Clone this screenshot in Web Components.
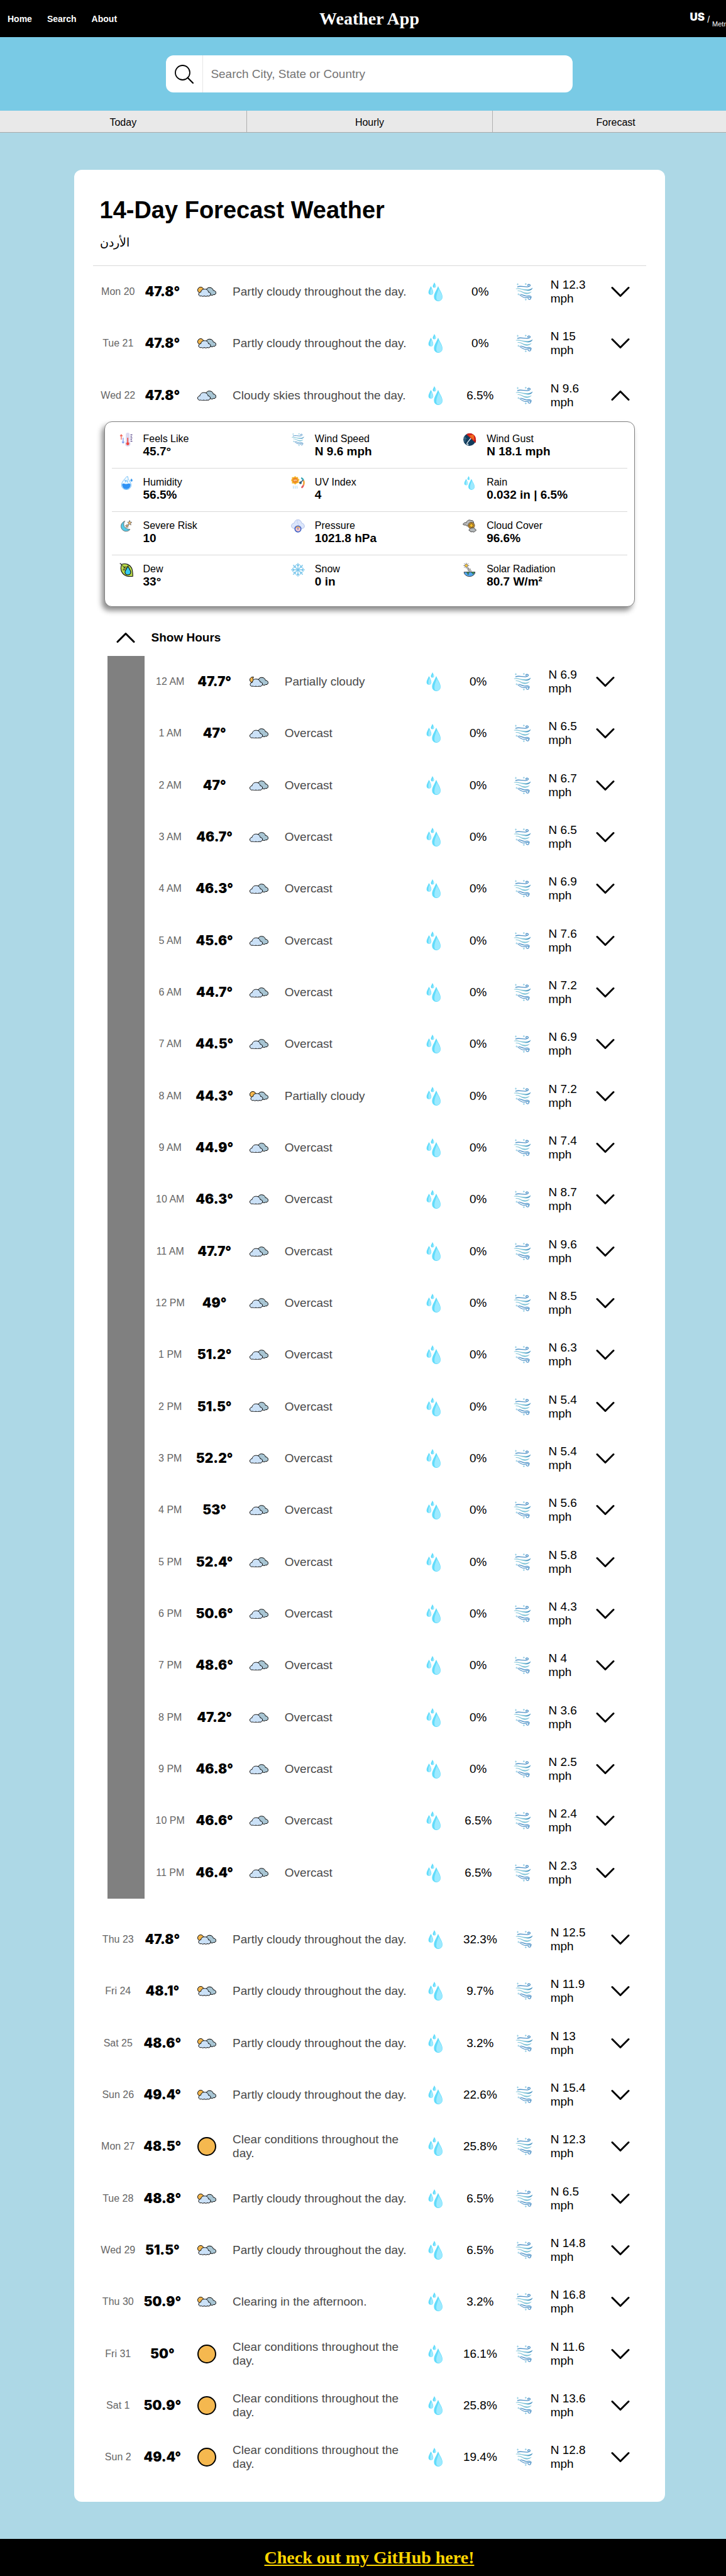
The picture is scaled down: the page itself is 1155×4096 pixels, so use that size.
<!DOCTYPE html>
<html lang="en">
<head>
<meta charset="utf-8">
<title>Weather App</title>
<style>
  html { overflow-x: hidden; }
  body { margin: 0; background: #add8e6; color: #000; font-family: "Liberation Sans", Arial, sans-serif; font-size: 19px; }
</style>
</head>
<body>
<weather-page></weather-page>

<script>
const ICONS = {
  chevron: `<svg viewBox="0 0 30 18"><path d="M2 2.5 15 15.5 28 2.5" fill="none" stroke="#000" stroke-width="3" stroke-linecap="round" stroke-linejoin="round"/></svg>`,
  search: `<svg viewBox="0 0 30 30"><circle cx="12.5" cy="12.5" r="11.5" fill="none" stroke="#000" stroke-width="1.8"/><path d="M20.5 20.5 29 29" stroke="#000" stroke-width="2.2" stroke-linecap="round"/></svg>`,
  overcast: `<svg viewBox="0 0 60 32"><g stroke="#000" stroke-width="2" stroke-linejoin="round"><path fill="#a8c5d3" d="M27 10C29 3 35 1 39 1.500 46 2 50 6 50.500 11 56 11 59 15 59 19 59 24 55 26 51.500 25 48 28 43 27 40 25Z"/><path fill="#cbe1f7" d="M8 17C9 10 15 6 21 6.500 28 6 33 11 34 17 39 17 42 21 41 25 39 30 34 32 30 30 27 32 23 32 20 30 17 32 13 32 11 30 6 32 1 29 1 24 1 20 4 17 8 17Z"/></g></svg>`,
  partly: `<svg viewBox="0 0 60 32"><g stroke="#000" stroke-width="2" stroke-linejoin="round"><circle cx="10.500" cy="10.500" r="9.500" fill="#f5b84f"/><path fill="#a8c5d3" d="M28 10C30 4 35 2 40 2.500 46 3 50 7 50.500 11.500 56 12 59 15 59 19 59 24 55 26 51.500 25 48 28 43 27 40 25Z"/><path fill="#cbe1f7" d="M11 17C12 10 17 7 23 7.500 29 7 35 11 35 17 40 17 43 21 42 25 40 30 35 31 32 29 29 31 25 31 22 29 19 31 15 31 13 29 8 31 4 28 4 24 4 20 7 17 11 17Z"/></g></svg>`,
  night: `<svg viewBox="0 0 60 32"><g stroke="#000" stroke-width="2" stroke-linejoin="round"><path fill="#f5b84f" d="M13 1C5 0 1 5 1 10 1 14 3 17 7 18L14 12C10 9 10 4 13 1Z"/><path fill="#a8c5d3" d="M28 10C30 4 35 2 40 2.500 46 3 50 7 50.500 11.500 56 12 59 15 59 19 59 24 55 26 51.500 25 48 28 43 27 40 25Z"/><path fill="#cbe1f7" d="M9 18C10 10 15 7 21 7.500 27 7 33 11 34 17 39 17 42 21 41 25 39 30 34 32 30 30 27 32 23 32 20 30 17 32 13 32 11 30 6 32 2 29 2 25 2 21 5 18 9 18Z"/></g></svg>`,
  clear: `<svg viewBox="0 0 30 30"><circle cx="15" cy="15" r="14" fill="#f5b84f" stroke="#000" stroke-width="2"/></svg>`,
  rain: `<svg viewBox="0 0 30 30"><g fill="#61dcfb"><path d="M13 0C14.500 3 15.500 4.500 15.500 6A2.500 2.500 0 0 1 10.500 6C10.500 4.500 12 2.500 13 0Z"/><path d="M7.500 6C9.500 10 11.300 13 11.300 16.200A3.900 4.200 0 0 1 3.600 16.200C3.600 13 5.600 10 7.500 6Z"/><path d="M19 6C22 13 26 18 26 23.200A6.800 6.800 0 0 1 12.400 23.200C12.400 18 16 13 19 6Z"/></g><g fill="#9deaff"><path d="M14 2.500C15 4.500 15.300 5 15.300 6A2.200 2.200 0 0 1 13 8Z"/><path d="M8 9C10 12 11 14 11 16.500A3 3.500 0 0 1 7 19.500C6 17 6.500 12 8 9Z"/><path d="M20 10C23 16 25.500 19.500 25.500 23.500A5.500 6 0 0 1 17 28C14.500 23 18 16 20 10Z"/></g></svg>`,
  wind: `<svg viewBox="-2 -1 34 34"><g fill="none" stroke-linecap="round"><path d="M3 7C8 4.500 15 7.500 21 7 27 6.500 27 2.500 23 2.500 20.500 3 21 5 22.500 5" stroke="#4f93c8" stroke-width="1.500"/><path d="M7 21.500C11 25 16 27.500 20 26.500 24 24.500 27.500 26 26.500 28.500 25 30.500 21.500 29.500 22 27.500M9 20.500C13 22 17 24.500 21 23.500 25.500 22.500 29 24.500 27 27" stroke="#4f93c8" stroke-width="1.400"/><path d="M2 2.500h2.500M3.200 1.200v2.500M16.500 2h2.500M17.700.8v2.500M3.500 20.500h2.500M4.700 19.200v2.500M16.500 30h2.500M17.700 28.800v2.500" stroke="#8fcbe2" stroke-width="1.100"/></g><path fill="#85c7da" d="M0 10C6 8 11 11.500 18 11.500 23 12 27 11 30 8.500 29 13 24 15 19 14 12 13 8 10.500 0 11ZM3 14C9 12.500 12 17 18 17.500 22 18 26 17 28.500 15.500 26 20 20 21 16 19.500 11 17.500 9 14.500 3 14.800Z"/><path fill="#4489bf" d="M19 12.600C24 13 28 11 30 8.500 29 13 24 14.500 19 12.600Z"/></svg>`,
  feels: `<svg viewBox="0 0 30 30"><rect x="14" y="0" width="8" height="24" rx="4" fill="#dcd8f0"/><circle cx="18" cy="24" r="6" fill="#dcd8f0"/><path d="M18 11v12" stroke="#f0554d" stroke-width="2.400"/><circle cx="18" cy="24" r="3.300" fill="#f0453f"/><path d="M4 15V5M1.500 7.500 4 4.500 6.500 7.500" fill="none" stroke="#f0655a" stroke-width="1.800"/><path d="M8 11V22M5.500 19.500 8 22.500 10.500 19.500" fill="none" stroke="#7f9cf0" stroke-width="1.800"/><path d="M24 4.500h4M24 8h3M24 11.500h4M24 15h3M24 18.500h4" stroke="#5a4a8c" stroke-width="1.800"/></svg>`,
  humidity: `<svg viewBox="0 0 30 30"><path d="M16 1C10 8 4.500 13 4.500 19.500A10.500 10 0 0 0 25.500 19.500C25.500 13 18 8 18 1Z" fill="#f1faff" stroke="#6fbdf8" stroke-width="1.300"/><path d="M6 17C10 14 12 18 16 17 19 16 21 15 24 17.500A9.200 9.200 0 1 1 6 17Z" fill="#2f93f5"/><path d="M26 5C27.500 7 28.500 8 28.500 9.500A2.300 2.300 0 0 1 23.800 9.500C23.800 8 25 7 26 5Z" fill="#3c9bf0"/><path d="M12 13 18 8" stroke="#5bb4f8" stroke-width="1.400"/><circle cx="12.500" cy="9.500" r="1.300" fill="#5bb4f8"/><circle cx="17.500" cy="12.500" r="1.300" fill="#5bb4f8"/></svg>`,
  uv: `<svg viewBox="0 0 30 30"><path fill="#f5b62c" d="M9 0 11.500 2.500 15 2 15.500 5.500 18.500 8 16.500 11 17 15 13 15.500 9 18.500 6 16 2 16 2 12 0 9 2 6 2 2.500 6 2.500Z"/><circle cx="9" cy="9.200" r="5.500" fill="#ed8424"/><path d="M6.500 7.500v3h2v-3M10 7.500l1.200 3 1.200-3" fill="none" stroke="#fff3d0" stroke-width="1"/><path d="M5 21c-1 2 1 3 0 6M9 21c-1 2 1 3 0 6M13 21c-1 2 1 3 0 6" fill="none" stroke="#8ec9ea" stroke-width="1.300"/><g fill="none" stroke-width="3.500"><path d="M22 4C24.500 5 26 7 27 9.500" stroke="#38a7b8"/><path d="M27 9.500C28.500 13 28 17 27 19.500" stroke="#f3a43b"/><path d="M27 19.500C26 22.500 24.500 24 22.500 25" stroke="#e2555a"/></g><circle cx="20.500" cy="14.500" r="2.800" fill="#2f5f7c"/><path d="M20 14 26 9" stroke="#2f5f7c" stroke-width="2"/></svg>`,
  risk: `<svg viewBox="0 0 30 30"><path d="M12 3.500C5 6 3 12 3.500 16 4.500 23 11 26.500 16 25.500 20 25 22 23 23 21.500 15 21 10 17 9.500 12 9 8 10 5.500 12 3.500Z" fill="#54cbe8" stroke="#555" stroke-width="1.100"/><path d="M22 2 23.300 5.500 27 6 24 8.300 25 12 22 10 19 12 20 8.300 17.500 6 21 5.500ZM16.500 10.500 17.500 13 20 13.300 18 15 18.500 17.500 16.500 16 14.500 17.500 15 15 13 13.300 15.500 13Z" fill="#f6bd6c" stroke="#555" stroke-width="1"/></svg>`,
  pressure: `<svg viewBox="0 0 30 30"><path d="M7 8C8 2 12 .5 15 .5 19 .5 22 3 23 8 27 8 29.500 12 29 16 28 19 25 20 22 19.500L8 19.500C3 20 .5 17 .8 13.500 1 10 4 8 7 8Z" fill="#dce6fb" stroke="#a9b9e8" stroke-width="1.200"/><path d="M14 1.500c-2 5 2 8 3 11" stroke="#b7c6ee" fill="none"/><circle cx="15" cy="20.500" r="6.500" fill="#f8c9cf" stroke="#4166c8" stroke-width="2.400"/><path d="M11 18.500A4.500 4.500 0 0 1 19 18.500" fill="none" stroke="#f1aa4c" stroke-width="2"/><path d="M15 22V17.500" stroke="#3a57a8" stroke-width="1.500"/></svg>`,
  dew: `<svg viewBox="0 0 30 30"><path d="M1 1 5 4M5 3C14 0 23 4 26.500 11 29 17 29 23 29 29 22 30 12 29.500 6.500 22 2 16 2.500 9 5 3Z" fill="#b7d84a" stroke="#111" stroke-width="1.500"/><path d="M4 4 18 16M10 8v8M10 9h7M7 15h5" stroke="#222" stroke-width="1.200" fill="none"/><path d="M18.500 7C21 13 24.500 16 24.500 20.500A6.300 6.300 0 0 1 12 20.500C12 16 16 13 18.500 7Z" fill="#35cbee" stroke="#111" stroke-width="1.500"/></svg>`,
  snow: `<svg viewBox="0 0 30 30"><path fill="none" stroke="#7cc7ec" stroke-width="1.900" stroke-linecap="round" d="M15 1V29M1 15H29M5 5 25 25M25 5 5 25M12 3.500 15 7 18 3.500M12 26.500 15 23 18 26.500M3.500 12 7 15 3.500 18M26.500 12 23 15 26.500 18M5.500 9.500 9.500 9.500 9.500 5.500M20.500 5.500 20.500 9.500 24.500 9.500M5.500 20.500 9.500 20.500 9.500 24.500M20.500 24.500 20.500 20.500 24.500 20.500"/></svg>`,
  gust: `<svg viewBox="0 0 30 30"><circle cx="15" cy="15" r="13.500" fill="#123c5c"/><path d="M8 3.500C14 -.5 23 1 27 8 29.500 13 29 18 28 22Z" fill="#d4231c"/><path d="M14 6 24 4 25 17Z" fill="#f06a1e"/><path d="M25 17 28 22 29 16Z" fill="#a3100f"/><path d="M18 12 10 22C8 25 11 27 12.500 24.500" fill="none" stroke="#e5f0f5" stroke-width="1.900"/><path d="M2 10h5M2.500 13h6M3 16h4M3 19h3" stroke="#5f93ad" stroke-width="1.200"/></svg>`,
  cloudcover: `<svg viewBox="0 0 30 30"><g stroke="#444" stroke-width="1.300"><path d="M3 8C5 6 7 6.500 8 7 9 2 14 0 18 2 22 1.500 24 4 24 7L20 15C16 16 14 15 13 14 9 15 7 13 7 12 3 13 0 11 1 9.500Z" fill="#b9b9b9"/><circle cx="19" cy="13" r="7" fill="#e59a17"/><circle cx="19" cy="13" r="4" fill="#ffbd22"/><path d="M15 21C17 20 17 18 20 19 22 17 26 18 26.500 21 30 21 30 25 27 25 26 27.500 23 28 21.500 26.500 18 28 16 26 16 24.500 13 25 13 22 15 21Z" fill="#b4b8ba"/></g></svg>`,
  solar: `<svg viewBox="0 0 30 30"><circle cx="8" cy="6" r="3.200" fill="#ffc83a" stroke="#555" stroke-width="1"/><path d="M8 0v2M8 10v2M2 6h2M12 6h2M3.500 1.500 5 3M11 9l1.500 1.500M12.500 1.500 11 3M3.500 10.500 5 9M10 10 13 18M13 11C12 14 16 15 15 19M16 12C15 15 19 15 18 19" fill="none" stroke="#444" stroke-width="1.200"/><path d="M3 20H27A12 9.500 0 0 1 3 20Z" fill="#4fa6ee" stroke="#333" stroke-width="1.200"/><path d="M9 20 14 20 12 26ZM19 20 26 20 23 25Z" fill="#39a455" stroke="#333" stroke-width=".8"/></svg>`
};

const define = (name, css, html) => customElements.define(name, class extends HTMLElement {
  constructor() {
    super();
    this.attachShadow({ mode: "open" });
  }
  connectedCallback() {
    this.shadowRoot.innerHTML = `<style>*{box-sizing:border-box}${css}</style>${typeof html === "function" ? html(this) : html}`;
  }
});

const attr = (el, name) => el.getAttribute(name) ?? "";

define("weather-icon", `
  :host { display: block; width: 30px; }
  svg { display: block; width: 100%; height: auto; }
`, el => ICONS[attr(el, "name")]);

define("site-header", `
  :host { display: grid; grid-template-columns: 1fr auto 1fr; align-items: center; height: 59px; padding: 0 12px; background: #000; color: #fff; }
  nav { display: flex; gap: 24px; }
  a { color: inherit; text-decoration: none; font: bold 14px/16px "Liberation Sans", Arial, sans-serif; }
  h2 { margin: 0; font: bold 28px/32px "Liberation Serif", "Times New Roman", serif; }
  .units { display: flex; justify-content: flex-end; gap: 4px; height: 30px; padding-top: 2px; }
  button { padding: 0; border: 0; background: none; color: inherit; cursor: pointer; }
  .on { align-self: flex-start; font: 900 17px/20px Inter, "Liberation Sans", sans-serif; }
  .bar { align-self: center; font-size: 14px; line-height: 16px; }
  .off { align-self: flex-end; font: 11px/14px "Liberation Sans", Arial, sans-serif; }
`, `
  <nav><a href="#home">Home</a><a href="#search">Search</a><a href="#about">About</a></nav>
  <h2>Weather App</h2>
  <div class="units"><button class="on">US</button><span class="bar">/</span><button class="off">Metric</button></div>
`);

define("city-search", `
  :host { display: block; padding: 29px 0; background: #79cae5; }
  form { display: flex; width: 55%; height: 59px; margin: 0 auto; background: #fff; border-radius: 12px; overflow: hidden; }
  label { display: grid; place-items: center; flex: 0 0 59px; border-right: 1px solid #e6e6e6; }
  input { flex: 1; min-width: 0; padding: 0 12px; border: 0; outline: 0; background: none; font: 19px "Liberation Sans", Arial, sans-serif; }
  input::placeholder { color: #757575; }
`, `
  <form><label for="q" aria-label="Search"><weather-icon name="search"></weather-icon></label>
  <input id="q" type="search" placeholder="Search City, State or Country"></form>
`);

define("page-tabs", `
  :host { display: block; background: #e9e9e9; border-bottom: 1px solid #aaa; }
  nav { display: grid; grid-template-columns: repeat(3, 1fr); }
  a { padding: 9px 0 5px; color: #000; font-size: 16px; line-height: 20px; text-align: center; text-decoration: none; }
  a + a { border-left: 1px solid #b0b0b0; }
`, `<nav><a href="#today">Today</a><a href="#hourly">Hourly</a><a href="#forecast">Forecast</a></nav>`);

define("forecast-row", `
  :host { display: grid; align-items: center; grid-template-columns: repeat(3, 24fr) 100fr repeat(3, 24fr) 28fr 24fr; padding: 0 5px; }
  :host([hour]) { grid-template-columns: repeat(3, 24fr) 71fr repeat(3, 24fr) 21fr 24fr; padding: 0; }
  .when { color: #666; font-size: 16px; text-align: center; white-space: nowrap; }
  .temp { font: 900 21px/24px Inter, "Liberation Sans", sans-serif; text-align: center; }
  weather-icon { justify-self: center; }
  .text { padding-left: 6px; line-height: 22px; }
  .desc { color: #4a4a4a; }
  .rain { text-align: center; }
  button { justify-self: center; padding: 0; border: 0; background: none; cursor: pointer; }
  :host([open]) button { transform: rotate(180deg); }
`, el => `
  <span class="when">${attr(el, "when")}</span>
  <span class="temp">${attr(el, "temp")}°</span>
  <weather-icon name="${attr(el, "icon")}"></weather-icon>
  <span class="text desc">${attr(el, "desc")}</span>
  <weather-icon name="rain"></weather-icon>
  <span class="rain">${attr(el, "rain")}%</span>
  <weather-icon name="wind"></weather-icon>
  <span class="text">N ${attr(el, "wind")} mph</span>
  <button aria-label="Toggle details"><weather-icon name="chevron"></weather-icon></button>
`);

define("forecast-list", `
  :host { display: block; }
  ::slotted(forecast-row) { min-height: 82px; }
  ::slotted(forecast-row:nth-child(3n)) { min-height: 83px; }
`, `<slot></slot>`);

define("detail-item", `
  :host { display: flex; gap: 16px; padding: 12px 0 16px 12px; }
  weather-icon { width: 22px; }
  span, b { display: block; line-height: 20px; }
  span { font-size: 16px; }
`, el => `
  <weather-icon name="${attr(el, "icon")}"></weather-icon>
  <div><span>${attr(el, "label")}</span><b><slot></slot></b></div>
`);

define("detail-row", `
  :host { display: grid; grid-template-columns: repeat(3, 1fr); border-bottom: 1px solid #d9d9d9; }
  :host(:last-child) { border-bottom: 0; }
`, `<slot></slot>`);

define("day-details", `
  :host { display: block; margin: 0 18px; padding: 5px 11px 13px; border: 1px solid #808080; border-radius: 12px; background: #fff; box-shadow: -4px 6px 8px rgba(0, 0, 0, .45); }
`, `<slot></slot>`);

define("hour-section", `
  :host { display: block; margin: 19px 29px 24px 23px; }
  button { display: flex; align-items: center; height: 59px; padding: 0; border: 0; background: none; font: bold 19px/22px "Liberation Sans", Arial, sans-serif; cursor: pointer; }
  weather-icon { margin: 0 26px 0 14px; transform: rotate(180deg); }
  .hours { padding-left: 6px; border-left: 59px solid #808080; }
`, `
  <button><weather-icon name="chevron"></weather-icon>Show Hours</button>
  <div class="hours"><slot></slot></div>
`);

define("forecast-card", `
  :host { display: block; margin: 59px 10%; padding: 30px; border-radius: 12px; background: #fff; }
  header { padding: 12px 11px 24px; border-bottom: 1px solid #d9d9d9; }
  h1 { margin: 0 0 18px; font-size: 38px; line-height: 44px; }
  p { margin: 0; font-size: 19px; line-height: 24px; }
`, `
  <header><h1>14-Day Forecast Weather</h1><p lang="ar">الأردن</p></header>
  <slot></slot>
`);

define("site-footer", `
  :host { display: grid; place-items: center; height: 59px; background: #000; }
  a { color: #ffd700; font: bold 28px/32px "Liberation Serif", "Times New Roman", serif; }
`, `<a href="#github">Check out my GitHub here!</a>`);

const PARTLY = "Partly cloudy throughout the day.";
const CLEAR = "Clear conditions throughout the day.";
const DAYS = [
  ["Mon 20", "47.8", "partly", PARTLY, "0", "12.3"],
  ["Tue 21", "47.8", "partly", PARTLY, "0", "15"],
  ["Wed 22", "47.8", "overcast", "Cloudy skies throughout the day.", "6.5", "9.6"],
  ["Thu 23", "47.8", "partly", PARTLY, "32.3", "12.5"],
  ["Fri 24", "48.1", "partly", PARTLY, "9.7", "11.9"],
  ["Sat 25", "48.6", "partly", PARTLY, "3.2", "13"],
  ["Sun 26", "49.4", "partly", PARTLY, "22.6", "15.4"],
  ["Mon 27", "48.5", "clear", CLEAR, "25.8", "12.3"],
  ["Tue 28", "48.8", "partly", PARTLY, "6.5", "6.5"],
  ["Wed 29", "51.5", "partly", PARTLY, "6.5", "14.8"],
  ["Thu 30", "50.9", "partly", "Clearing in the afternoon.", "3.2", "16.8"],
  ["Fri 31", "50", "clear", CLEAR, "16.1", "11.6"],
  ["Sat 1", "50.9", "clear", CLEAR, "25.8", "13.6"],
  ["Sun 2", "49.4", "clear", CLEAR, "19.4", "12.8"]
];
const TEMPS = "47.7 47 47 46.7 46.3 45.6 44.7 44.5 44.3 44.9 46.3 47.7 49 51.2 51.5 52.2 53 52.4 50.6 48.6 47.2 46.8 46.6 46.4".split(" ");
const WINDS = "6.9 6.5 6.7 6.5 6.9 7.6 7.2 6.9 7.2 7.4 8.7 9.6 8.5 6.3 5.4 5.4 5.6 5.8 4.3 4 3.6 2.5 2.4 2.3".split(" ");
const HOURS = TEMPS.map((temp, h) => {
  const partial = h === 0 || h === 8;
  return [`${h % 12 || 12} ${h < 12 ? "AM" : "PM"}`, temp, h === 0 ? "night" : partial ? "partly" : "overcast",
    partial ? "Partially cloudy" : "Overcast", h > 21 ? "6.5" : "0", WINDS[h]];
});
const DETAILS = [
  [["feels", "Feels Like", "45.7°"], ["wind", "Wind Speed", "N 9.6 mph"], ["gust", "Wind Gust", "N 18.1 mph"]],
  [["humidity", "Humidity", "56.5%"], ["uv", "UV Index", "4"], ["rain", "Rain", "0.032 in | 6.5%"]],
  [["risk", "Severe Risk", "10"], ["pressure", "Pressure", "1021.8 hPa"], ["cloudcover", "Cloud Cover", "96.6%"]],
  [["dew", "Dew", "33°"], ["snow", "Snow", "0 in"], ["solar", "Solar Radiation", "80.7 W/m²"]]
];
const rows = (list, flag) => list.map(([when, temp, icon, desc, rain, wind]) =>
  `<forecast-row ${flag} ${when === "Wed 22" ? "open" : ""} when="${when}" temp="${temp}" icon="${icon}" desc="${desc}" rain="${rain}" wind="${wind}"></forecast-row>`).join("");

define("weather-page", `
  :host { display: block; width: calc(100% + 20px); }
`, () => `
  <site-header></site-header>
  <city-search></city-search>
  <page-tabs></page-tabs>
  <forecast-card>
    <forecast-list>${rows(DAYS.slice(0, 3), "")}</forecast-list>
    <day-details>${DETAILS.map(row => `<detail-row>${row.map(([icon, label, value]) =>
      `<detail-item icon="${icon}" label="${label}">${value}</detail-item>`).join("")}</detail-row>`).join("")}</day-details>
    <hour-section><forecast-list>${rows(HOURS, "hour")}</forecast-list></hour-section>
    <forecast-list>${rows(DAYS.slice(3), "")}</forecast-list>
  </forecast-card>
  <site-footer></site-footer>
`);
</script>
</body>
</html>
